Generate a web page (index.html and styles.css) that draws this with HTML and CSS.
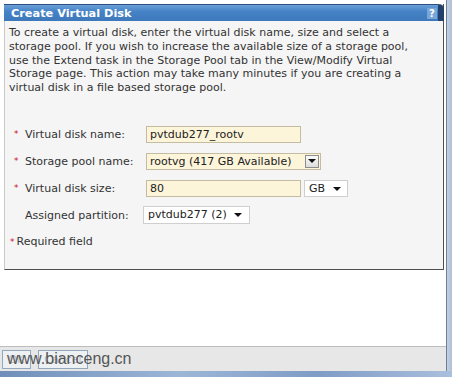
FILE: index.html
```html
<!DOCTYPE html>
<html lang="en">
    <head>
        <meta charset="utf-8" />
        <title>Create Virtual Disk</title>
        <link rel="stylesheet" href="styles.css">
    </head>
    <body>
        <div class="window">
            <div class="main">
                <div class="content">
                    <div class="panel">
                        <div class="panel_head">
                            <span class="title">Create Virtual Disk</span>
                            <span class="help">?</span>
                        </div>
                        <div class="panel_body">
                            <p class="intro">To create a virtual disk, enter the virtual disk name, size and select a storage pool. If you wish to increase the available size of a storage pool, use the Extend task in the Storage Pool tab in the View/Modify Virtual Storage page. This action may take many minutes if you are creating a virtual disk in a file based storage pool.</p>
                            <div class="form">
                                <div class="row">
                                    <span class="req">*</span>
                                    <span class="label">Virtual disk name:</span>
                                    <div class="field"><div class="input name_input">pvtdub277_rootv</div></div>
                                </div>
                                <div class="row">
                                    <span class="req">*</span>
                                    <span class="label">Storage pool name:</span>
                                    <div class="field">
                                        <div class="input pool_select">
                                            <span class="pool_text">rootvg (417 GB Available)</span>
                                            <span class="drop_btn"><span class="tri"></span></span>
                                        </div>
                                    </div>
                                </div>
                                <div class="row">
                                    <span class="req">*</span>
                                    <span class="label">Virtual disk size:</span>
                                    <div class="field">
                                        <div class="input name_input">80</div>
                                        <div class="select unit_select">GB <span class="tri"></span></div>
                                    </div>
                                </div>
                                <div class="row">
                                    <span class="req"></span>
                                    <span class="label">Assigned partition:</span>
                                    <div class="field">
                                        <div class="select part_select">pvtdub277 (2) <span class="tri"></span></div>
                                    </div>
                                </div>
                            </div>
                            <div class="required"><span class="req_small">*</span>Required field</div>
                        </div>
                    </div>
                </div>
                <div class="footer">
                    <div class="btn ok_btn">OK</div>
                    <div class="btn cancel_btn">Cancel</div>
                    <span class="watermark">www.bianceng.cn</span>
                </div>
            </div>
            <div class="frame_right"></div>
            <div class="frame_bottom"></div>
        </div>
    </body>
</html>
```

FILE: styles.css
```css
html, body {
    margin: 0;
    padding: 0;
    background: #fff;
    overflow: hidden;
}
body {
    font-family: "DejaVu Sans", Verdana, sans-serif;
    font-size: 11px;
    color: #333;
}
.window {
    display: grid;
    grid-template-columns: 446px 6px;
    grid-template-rows: 371px 6px;
    width: 452px;
    height: 377px;
}
.main {
    display: flex;
    flex-direction: column;
    background: #fff;
    position: relative;
}
.content {
    flex: 1;
    padding: 4px 0 0 4px;
}
.frame_right {
    background: linear-gradient(to right, #6e7f98 0, #6e7f98 1px, #c3d0e2 1px, #aebfd6 100%);
}
.frame_bottom {
    grid-column: 1 / 3;
    background: linear-gradient(to right, #6f8fba, #9cb6d6 40%, #7f9cc6 70%, #a9bfdc);
}
.panel {
    width: 440px;
    box-sizing: border-box;
    background: #f5f5f5;
    border-left: 1px solid #c9c9c9;
    border-right: 1px solid #4e4e4e;
    border-bottom: 1px solid #4e4e4e;
}
.panel_head {
    height: 17px;
    margin: 0 -1px 0 -1px;
    display: flex;
    align-items: center;
    background: linear-gradient(#6a9fd8, #4583c6 40%, #3d78bb);
    border-top: 1px solid #2d4f80;
    border-right: 6px solid #24406d;
    border-top-right-radius: 5px;
    box-sizing: border-box;
}
.title {
    flex: 1;
    color: #fff;
    font-weight: bold;
    font-size: 11.3px;
    padding-left: 7px;
}
.help {
    width: 10px;
    height: 11px;
    margin-right: 1px;
    background: #78a6d9;
    color: #fff;
    font-weight: bold;
    font-size: 10px;
    line-height: 11px;
    text-align: center;
}
.panel_body {
    padding: 5px 4px 20px 4px;
}
.intro {
    margin: 0;
    line-height: 13.75px;
    width: 410px;
}
.form {
    margin-top: 31px;
    display: flex;
    flex-direction: column;
    gap: 10px;
}
.row {
    display: flex;
    align-items: center;
    height: 17px;
}
.req {
    width: 16px;
    padding-left: 5px;
    box-sizing: border-box;
    color: #c8102e;
    font-size: 9px;
}
.label {
    width: 121px;
}
.field {
    display: flex;
    align-items: center;
    gap: 3px;
}
.input {
    height: 17px;
    box-sizing: border-box;
    background: #fdf5da;
    border: 1px solid #c4bba0;
    padding: 0 3px;
    line-height: 15px;
    color: #222;
}
.name_input {
    width: 155px;
}
.pool_select {
    width: 175px;
    display: flex;
    align-items: center;
    padding-right: 1px;
}
.pool_text {
    flex: 1;
}
.drop_btn {
    width: 14px;
    height: 13px;
    box-sizing: border-box;
    border: 1px solid #8c8c8c;
    background: linear-gradient(#fbfbfb, #dcdcdc);
    display: flex;
    align-items: center;
    justify-content: center;
}
.tri {
    display: inline-block;
    width: 0;
    height: 0;
    border-left: 4px solid transparent;
    border-right: 4px solid transparent;
    border-top: 4px solid #111;
    vertical-align: middle;
    margin-left: 4px;
}
.drop_btn .tri {
    margin-left: 0;
}
.select {
    height: 17px;
    box-sizing: border-box;
    background: #fff;
    border: 1px solid #cfcfcf;
    padding: 0 4px;
    line-height: 15px;
    color: #222;
}
.unit_select {
    width: 44px;
}
.part_select {
    width: 107px;
    margin-left: -3px;
    height: 18px;
}
.required {
    margin-top: 11px;
    line-height: 14px;
    margin-left: 1px;
}
.req_small {
    color: #c8102e;
    font-size: 9px;
    margin-right: 2px;
}
.footer {
    height: 25px;
    box-sizing: border-box;
    background: #e7e7e7;
    border-top: 1px solid #bdbdbd;
    display: flex;
    align-items: flex-start;
    gap: 7px;
    padding: 3px 0 0 2px;
}
.btn {
    height: 19px;
    box-sizing: border-box;
    border: 1px solid #93a7bd;
    background: #eef1f4;
    color: #b4bcc4;
    line-height: 17px;
    text-align: center;
}
.ok_btn {
    width: 29px;
}
.cancel_btn {
    width: 50px;
}
.watermark {
    position: absolute;
    left: 7px;
    bottom: 3px;
    font-family: "Liberation Sans", Arial, sans-serif;
    font-size: 16px;
    color: #555;
}
```
